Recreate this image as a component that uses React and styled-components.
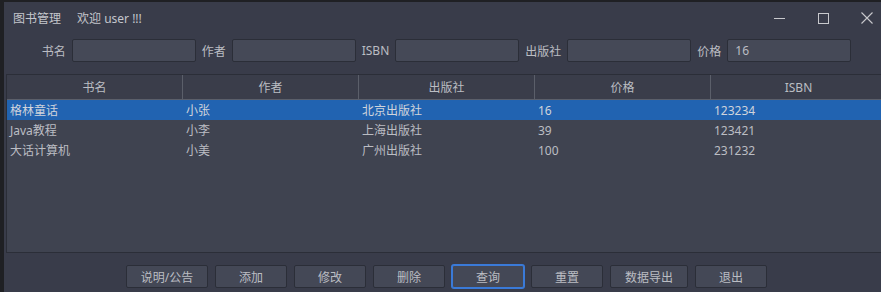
import styled, { createGlobalStyle } from 'styled-components';

const Global = createGlobalStyle`
    html, body {
        margin: 0;
        padding: 0;
        background: #1f2024;
        overflow: hidden;
    }
    body {
        font-family: "Noto Sans", "Noto Sans CJK SC", sans-serif;
        font-size: 12px;
        color: #bbbdc3;
    }
`;

const Frame = styled.div`
    margin: 2px 0 0 4px;
    width: 885px;
    height: 290px;
    background: #393c4a;
    display: flex;
    flex-direction: column;
`;

const TitleBar = styled.div`
    height: 32px;
    display: flex;
    align-items: center;
    padding-left: 9px;
`;

const Title = styled.span`
    color: #c4c6cc;
    margin-right: ${p => p.$gap || 0}px;
    white-space: nowrap;
`;

const Controls = styled.div`
    margin-left: auto;
    display: flex;
    height: 100%;
`;

const ControlButton = styled.div`
    width: 44px;
    height: 100%;
    display: flex;
    align-items: center;
    justify-content: center;
    color: #c8c9cd;
`;

const SearchRow = styled.div`
    display: flex;
    align-items: center;
    justify-content: center;
    gap: 6px;
    padding-top: 5px;
`;

const Label = styled.span`
    white-space: nowrap;
`;

const Input = styled.input`
    box-sizing: border-box;
    width: 124px;
    height: 23px;
    background: #454957;
    border: 1px solid #2b2e38;
    border-radius: 2px;
    outline: none;
    color: #bbbdc3;
    font: inherit;
    padding: 0 7px;
`;

const Table = styled.div`
    margin: 12px 2px 0 2px;
    height: 179px;
    box-sizing: border-box;
    border: 1px solid #2b2e38;
    background: #3f4350;
    display: flex;
    flex-direction: column;
`;

const HeaderRow = styled.div`
    display: grid;
    grid-template-columns: repeat(5, 176px);
    height: 25px;
    box-sizing: border-box;
    background: #3a3d4a;
    border-bottom: 1px solid #5b5f6a;
`;

const HeaderCell = styled.div`
    border-right: 1px solid #5b5f6a;
    display: flex;
    align-items: center;
    justify-content: center;
`;

const Row = styled.div`
    display: grid;
    grid-template-columns: repeat(5, 176px);
    height: 20px;
    background: ${p => (p.$selected ? '#2163b1' : 'transparent')};
    color: ${p => (p.$selected ? '#d0d4dc' : '#bbbdc3')};
`;

const Cell = styled.div`
    display: flex;
    align-items: center;
    padding-left: 3px;
    white-space: nowrap;
`;

const ButtonRow = styled.div`
    display: flex;
    justify-content: center;
    gap: 7px;
    margin-top: 12px;
`;

const Button = styled.button`
    box-sizing: border-box;
    width: ${p => p.$w || 72}px;
    height: 23px;
    background: #444856;
    border: 1px solid ${p => (p.$focus ? '#3a7ad8' : '#2b2e38')};
    box-shadow: ${p => (p.$focus ? '0 0 0 1px #3a7ad8' : 'none')};
    border-radius: 2px;
    color: #bbbdc3;
    font: inherit;
    padding: 0;
`;

const columns = ['书名', '作者', '出版社', '价格', 'ISBN'];

const books = [
    ['格林童话', '小张', '北京出版社', '16', '123234'],
    ['Java教程', '小李', '上海出版社', '39', '123421'],
    ['大话计算机', '小美', '广州出版社', '100', '231232'],
];

const buttons = [
    { text: '说明/公告', w: 82 },
    { text: '添加' },
    { text: '修改' },
    { text: '删除' },
    { text: '查询', focus: true },
    { text: '重置' },
    { text: '数据导出', w: 78 },
    { text: '退出' },
];

function App() {
    return (
        <>
            <Global />
            <Frame>
                <TitleBar>
                    <Title $gap={16}>图书管理</Title>
                    <Title>欢迎 user !!!</Title>
                    <Controls>
                        <ControlButton>
                            <svg width="11" height="11" viewBox="0 0 11 11">
                                <path d="M0 5.5h11" stroke="currentColor" strokeWidth="1" />
                            </svg>
                        </ControlButton>
                        <ControlButton>
                            <svg width="11" height="11" viewBox="0 0 11 11">
                                <rect x="0.5" y="0.5" width="10" height="10" fill="none" stroke="currentColor" strokeWidth="1" />
                            </svg>
                        </ControlButton>
                        <ControlButton>
                            <svg width="12" height="12" viewBox="0 0 12 12">
                                <path d="M0.5 0.5L11.5 11.5M11.5 0.5L0.5 11.5" stroke="currentColor" strokeWidth="1.1" />
                            </svg>
                        </ControlButton>
                    </Controls>
                </TitleBar>

                <SearchRow>
                    <Label>书名</Label>
                    <Input />
                    <Label>作者</Label>
                    <Input />
                    <Label>ISBN</Label>
                    <Input />
                    <Label>出版社</Label>
                    <Input />
                    <Label>价格</Label>
                    <Input defaultValue="16" />
                </SearchRow>

                <Table>
                    <HeaderRow>
                        {columns.map(c => <HeaderCell key={c}>{c}</HeaderCell>)}
                    </HeaderRow>
                    {books.map((b, i) => (
                        <Row key={b[0]} $selected={i === 0}>
                            {b.map((v, j) => <Cell key={j}>{v}</Cell>)}
                        </Row>
                    ))}
                </Table>

                <ButtonRow>
                    {buttons.map(b => (
                        <Button key={b.text} $w={b.w} $focus={b.focus}>{b.text}</Button>
                    ))}
                </ButtonRow>
            </Frame>
        </>
    );
}

export default App;
